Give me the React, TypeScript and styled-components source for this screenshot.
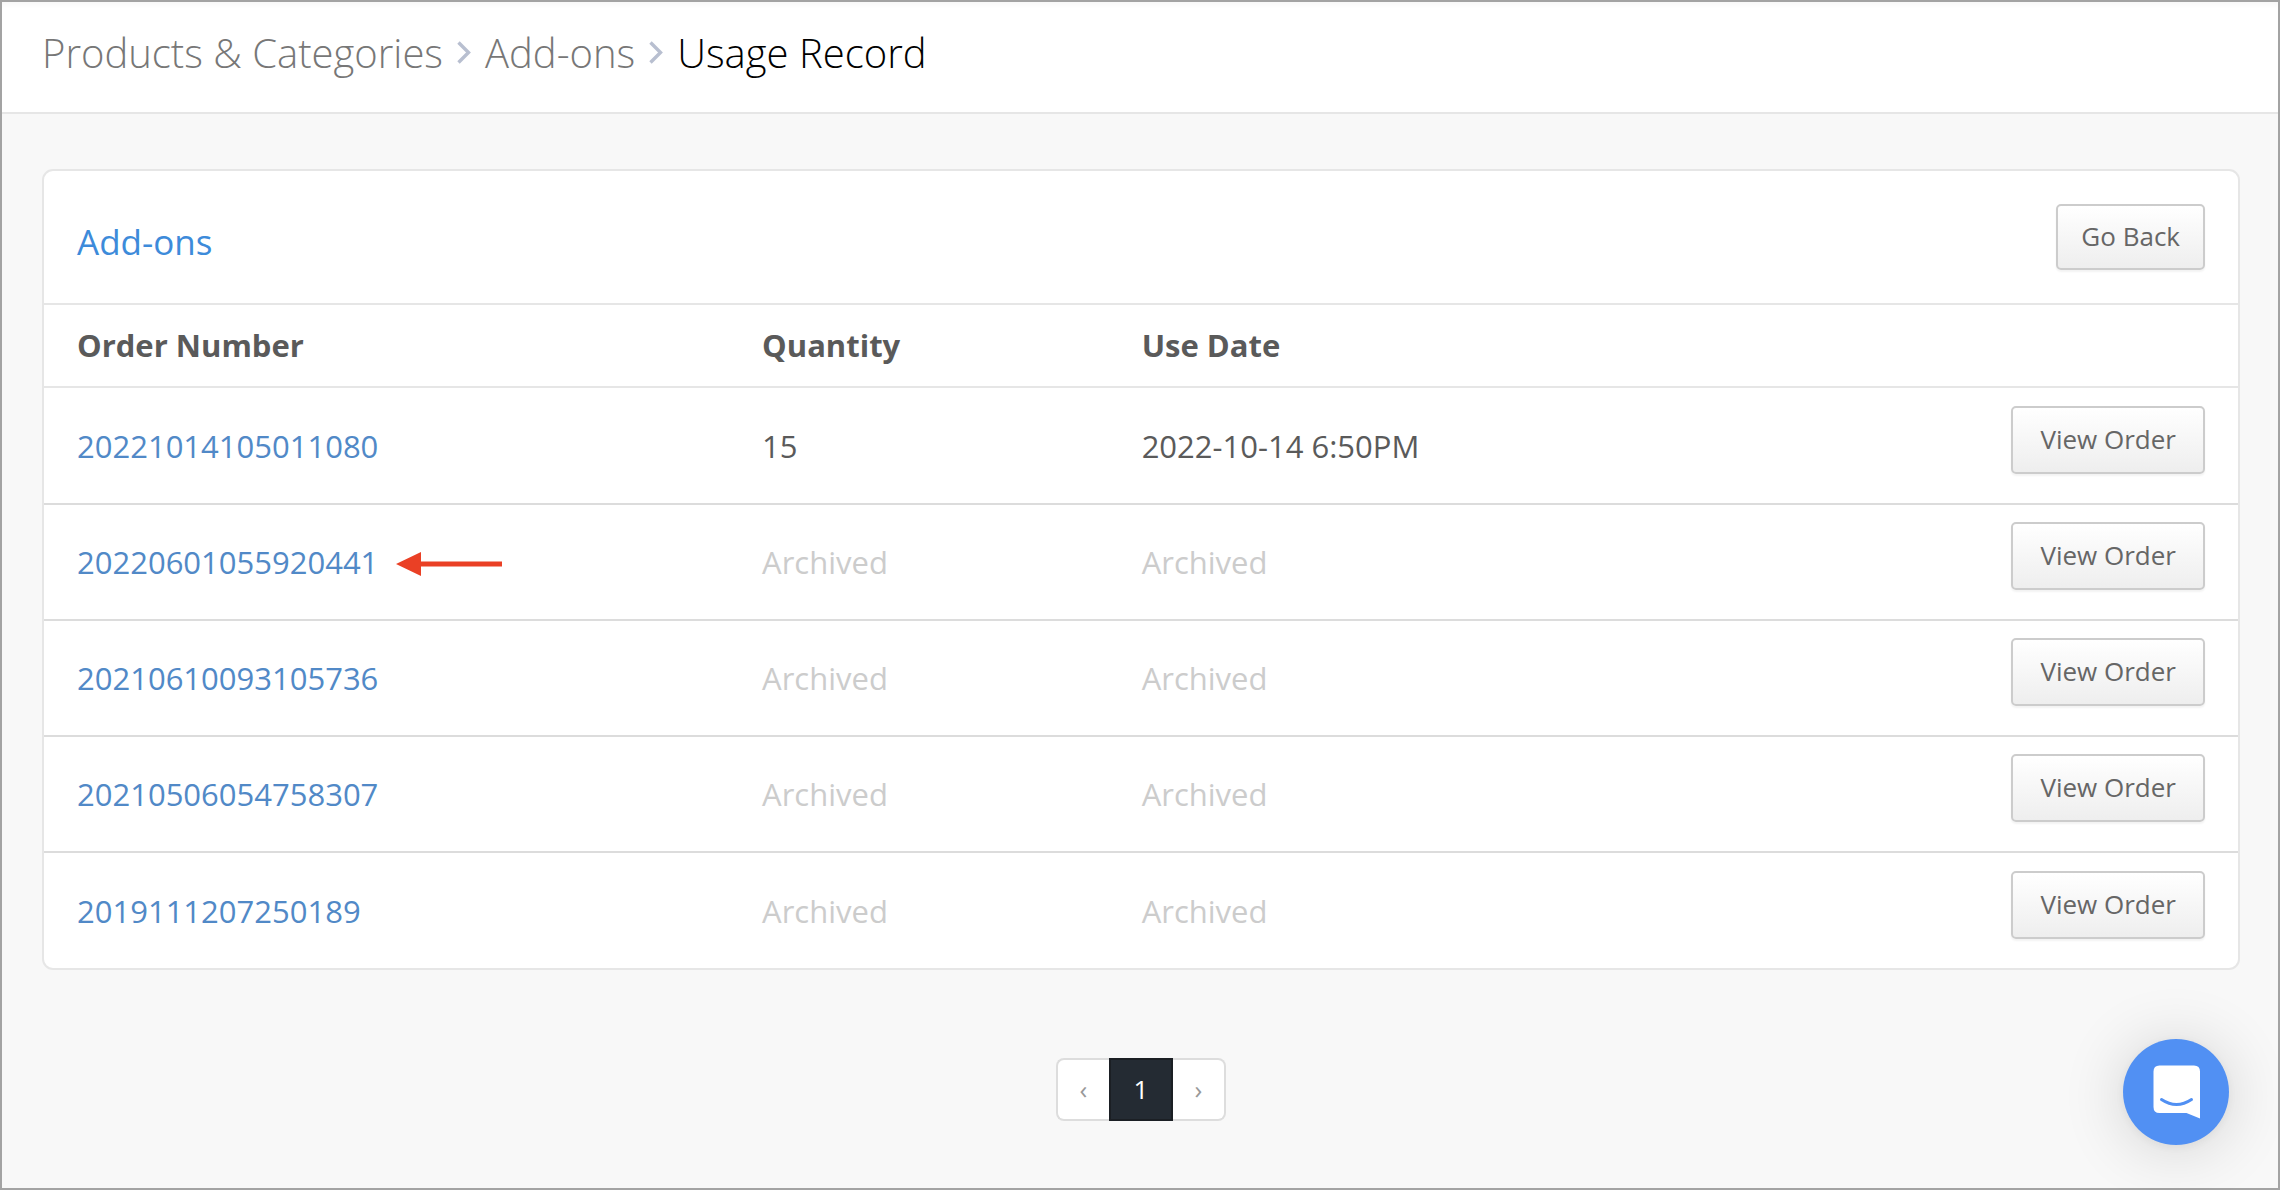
import React from "react";
import styled, { createGlobalStyle, css } from "styled-components";

const GlobalStyle = createGlobalStyle`
  *, *::before, *::after { box-sizing: border-box; }
  body {
    margin: 0;
    background: #f8f8f8;
    color: #5a5a5a;
    font-family: "Open Sans", "Noto Sans", sans-serif;
    font-size: 31px;
  }
  a { text-decoration: none; }
`;

const Page = styled.div`
  min-height: 100vh;
  border: 2px solid #a3a3a3;
`;

const TopBar = styled.header`
  padding: 22px 40px 30px;
  background: #fff;
  border-bottom: 2px solid #e6e6e6;
  box-shadow: inset 0 6px 6px -4px rgba(0, 0, 0, 0.04);
`;

const Breadcrumb = styled.nav`
  display: flex;
  align-items: center;
  gap: 14px;
  font-size: 40px;
  font-weight: 300;
  line-height: 58px;
`;

const CrumbLink = styled.a`
  color: #777;
`;

const CrumbCurrent = styled.span`
  color: #000;
`;

const Main = styled.main`
  padding: 55px 38px 64px 40px;
`;

const Card = styled.section`
  background: #fff;
  border: 2px solid #e6e6e6;
  border-radius: 11px;
`;

const CardHeader = styled.div`
  display: flex;
  align-items: flex-end;
  justify-content: space-between;
  padding: 33px;
`;

const CardTitle = styled.h2`
  margin: 0;
  color: #3d8bda;
  font-size: 35px;
  font-weight: 400;
  line-height: 56px;
`;

const Button = styled.button<{ $roomy?: boolean }>`
  padding: ${(p) => (p.$roomy ? "14px 27px 16px" : "13px 23px 15px")};
  border: 2px solid #ccc;
  border-radius: 5px;
  background: linear-gradient(#fff, #eee);
  box-shadow: 0 2px 2px rgba(0, 0, 0, 0.05);
  color: #666;
  font-family: inherit;
  font-size: 26px;
  line-height: 34px;
  white-space: nowrap;
  cursor: pointer;
`;

const Table = styled.table`
  width: 100%;
  border-collapse: collapse;
  table-layout: fixed;
`;

const Column = styled.col<{ $width?: string }>`
  width: ${(p) => p.$width ?? "auto"};
`;

const cell = css`
  padding: 0 16px;
  text-align: left;
  vertical-align: middle;
  &:first-child { padding-left: 33px; }
  &:last-child { padding-right: 33px; }
`;

const HeadRow = styled.tr`
  height: 83px;
  border-top: 2px solid #e6e6e6;
`;

const HeadCell = styled.th`
  ${cell}
  padding-bottom: 2px;
  color: #5a5a5a;
  font-weight: 700;
`;

const Row = styled.tr`
  height: 116px;
  border-top: 2px solid #dcdcdc;
  &:first-child {
    height: 117px;
    border-top-color: #e6e6e6;
  }
`;

const Cell = styled.td<{ $muted?: boolean }>`
  ${cell}
  color: ${(p) => (p.$muted ? "#ccc" : "#5a5a5a")};
`;

const ActionCell = styled.td`
  ${cell}
  padding-bottom: 12px;
  text-align: right;
`;

const OrderRef = styled.div`
  display: flex;
  align-items: center;
  gap: 18px;
`;

const OrderLink = styled.a`
  color: #5189c7;
`;

const Pager = styled.nav`
  display: flex;
  justify-content: center;
  margin-top: 88px;
`;

const PageButton = styled.button<{ $side?: "left" | "right" }>`
  width: ${(p) => (p.$side ? "53px" : "64px")};
  height: 63px;
  padding: 0 0 2px;
  border: 2px solid ${(p) => (p.$side ? "#ddd" : "#1b1f24")};
  ${(p) => p.$side === "left" && "border-right: 0; border-radius: 8px 0 0 8px;"}
  ${(p) => p.$side === "right" && "border-left: 0; border-radius: 0 8px 8px 0;"}
  background: ${(p) => (p.$side ? "#fff" : "#242b33")};
  color: ${(p) => (p.$side ? "#999" : "#fff")};
  font-family: inherit;
  font-size: 26px;
  line-height: 34px;
  cursor: pointer;
`;

const ChatButton = styled.button`
  position: fixed;
  right: 51px;
  bottom: 45px;
  display: flex;
  align-items: center;
  justify-content: center;
  width: 106px;
  height: 106px;
  padding: 0;
  border: 0;
  border-radius: 50%;
  background: #5190f3;
  box-shadow: 0 2px 12px rgba(0, 0, 0, 0.06), 0 4px 64px rgba(0, 0, 0, 0.16);
  cursor: pointer;
`;

const Chevron = () => (
  <svg width="14" height="24" viewBox="0 0 14 24" fill="none" aria-hidden="true">
    <path d="M1.5 1.5 L11.5 11.5 L1.5 21.5" stroke="#b8bfd0" strokeWidth="3.4" />
  </svg>
);

const PointerArrow = () => (
  <svg width="106" height="30" viewBox="0 0 106 30" aria-hidden="true">
    <path d="M0 17 L25 5 V14.5 H106 V19.5 H25 V29 Z" fill="#ea4025" />
  </svg>
);

const ChatIcon = () => (
  <svg width="48" height="54" viewBox="-1 0 48 54" aria-hidden="true">
    <path
      d="M6.5 0.5 H41 Q47 0.5 47 6.5 V53.5 L33.5 48 H6.5 Q0.5 48 0.5 42 V6.5 Q0.5 0.5 6.5 0.5 Z"
      fill="#fff"
    />
    <path
      d="M8.5 34.5 Q23.5 44.5 38.5 34.5"
      fill="none"
      stroke="#5190f3"
      strokeWidth="3"
      strokeLinecap="round"
    />
  </svg>
);

interface Usage {
  order: string;
  quantity?: string;
  date?: string;
  flagged?: boolean;
}

const records: Usage[] = [
  { order: "20221014105011080", quantity: "15", date: "2022-10-14 6:50PM" },
  { order: "20220601055920441", flagged: true },
  { order: "20210610093105736" },
  { order: "20210506054758307" },
  { order: "2019111207250189" },
];

export default function App() {
  return (
    <Page>
      <GlobalStyle />
      <TopBar>
        <Breadcrumb aria-label="Breadcrumb">
          <CrumbLink href="#products">Products &amp; Categories</CrumbLink>
          <Chevron />
          <CrumbLink href="#add-ons">Add-ons</CrumbLink>
          <Chevron />
          <CrumbCurrent aria-current="page">Usage Record</CrumbCurrent>
        </Breadcrumb>
      </TopBar>
      <Main>
        <Card>
          <CardHeader>
            <CardTitle>Add-ons</CardTitle>
            <Button type="button">Go Back</Button>
          </CardHeader>
          <Table>
            <colgroup>
              <Column $width="32%" />
              <Column $width="17.3%" />
              <Column />
              <Column $width="16%" />
            </colgroup>
            <thead>
              <HeadRow>
                <HeadCell scope="col">Order Number</HeadCell>
                <HeadCell scope="col">Quantity</HeadCell>
                <HeadCell scope="col">Use Date</HeadCell>
                <HeadCell as="td" />
              </HeadRow>
            </thead>
            <tbody>
              {records.map((r) => (
                <Row key={r.order}>
                  <Cell>
                    <OrderRef>
                      <OrderLink href={`#order-${r.order}`}>{r.order}</OrderLink>
                      {r.flagged && <PointerArrow />}
                    </OrderRef>
                  </Cell>
                  <Cell $muted={!r.quantity}>{r.quantity ?? "Archived"}</Cell>
                  <Cell $muted={!r.date}>{r.date ?? "Archived"}</Cell>
                  <ActionCell>
                    <Button type="button" $roomy>View Order</Button>
                  </ActionCell>
                </Row>
              ))}
            </tbody>
          </Table>
        </Card>
        <Pager aria-label="Pagination">
          <PageButton type="button" $side="left" aria-label="Previous page">‹</PageButton>
          <PageButton type="button" aria-current="page">1</PageButton>
          <PageButton type="button" $side="right" aria-label="Next page">›</PageButton>
        </Pager>
      </Main>
      <ChatButton type="button" aria-label="Open chat">
        <ChatIcon />
      </ChatButton>
    </Page>
  );
}
